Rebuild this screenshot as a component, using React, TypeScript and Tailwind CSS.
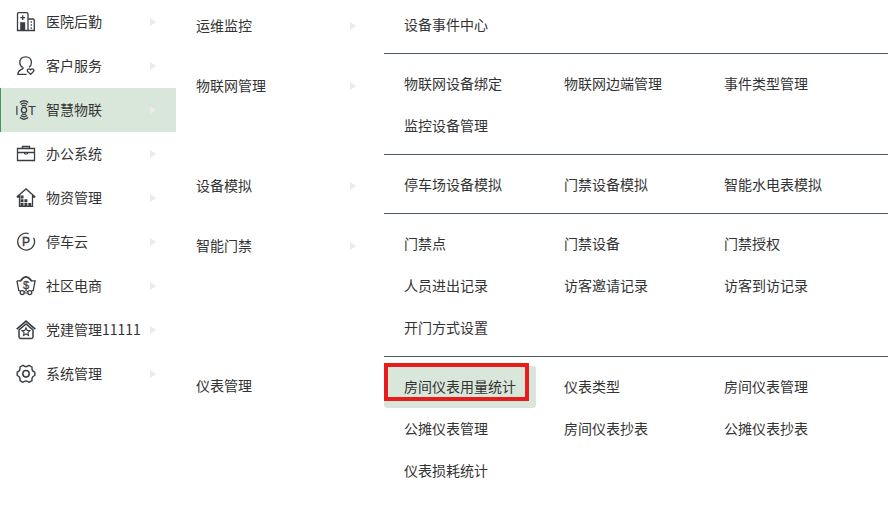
import type { ReactNode } from "react";
import { clsx } from "clsx";

type MenuItem = { label: string; icon: ReactNode; active?: boolean };
type Category = { label: string; height: string; arrow: boolean };
type Entry = { label: string; active?: boolean };

function Icon({ children }: { children: ReactNode }) {
  return (
    <svg
      viewBox="0 0 20 20"
      className="h-5 w-5 shrink-0"
      fill="none"
      stroke="#3a3d42"
      strokeWidth="1.3"
      aria-hidden="true"
    >
      {children}
    </svg>
  );
}

function Arrow() {
  return (
    <svg viewBox="0 0 6 8" className="h-2 w-1.5 shrink-0" fill="#ebebeb" aria-hidden="true">
      <path d="M0 0L6 4L0 8Z" />
    </svg>
  );
}

const hospital = (
  <Icon>
    <path d="M1.5 18.5V2Q1.5 .7 2.8 .7H10.7Q12 .7 12 2V18.5M12 7H17Q18.3 7 18.3 8.3V18.5M.8 18.5H19" />
    <path d="M6.7 3.2V8M4.3 5.6H9.1" />
    <path d="M4.2 10.2H9.2V18.5H4.2Z" fill="#3a3d42" stroke="none" />
    <path d="M15.3 9.2V17" strokeDasharray="1.6 1.4" />
  </Icon>
);

const customer = (
  <Icon>
    <path d="M6.6 11.4C4.4 10.2 3.8 8.2 3.8 6.4C3.8 3 6.3 .8 9.6 .8S15.4 3 15.4 6.4C15.4 8.2 14.8 10 13 11.2" />
    <path d="M6.6 11.4C8 12.4 6.6 12.8 5 13.6C3 14.6 1.8 16.2 1.8 18.4H10.6" />
    <path d="M14.6 18.4L11.7 15.5C10.4 13.8 12.6 11.8 14.6 13.8C16.6 11.8 18.8 13.8 17.5 15.5Z" />
  </Icon>
);

const iot = (
  <Icon>
    <g fill="#3a3d42" stroke="none" fontFamily="Liberation Sans, sans-serif" fontSize="13">
      <text x="-1" y="15">I</text>
      <text x="12" y="15">T</text>
    </g>
    <circle cx="8" cy="10" r="2.6" />
    <path d="M3.8 2.4Q8 -.9 12.2 2.4M4.8 4.4Q8 1.8 11.2 4.4M5.8 6.3Q8 4.6 10.2 6.3" />
    <path d="M3.8 17.6Q8 20.9 12.2 17.6M4.8 15.6Q8 18.2 11.2 15.6M5.8 13.7Q8 15.4 10.2 13.7" />
  </Icon>
);

const briefcase = (
  <Icon>
    <path d="M1.5 4.5H18.5V16.5H1.5ZM6.5 4.5V2.5H13.5V4.5M1.5 8.5H18.5" />
    <path d="M8.5 8.5V10H11.5V8.5" strokeWidth="1" />
  </Icon>
);

const warehouse = (
  <Icon>
    <path d="M.8 9L10 .9L19.2 9M3.5 7V18.4H16.5V7M.8 9H3.5M16.5 9H19.2" />
    <g fill="#3a3d42" stroke="none">
      <path d="M4.5 7.6H7.5V10.5H4.5ZM4.5 11.3H7.5V14.2H4.5ZM8.4 11.3H11.4V14.2H8.4ZM4.5 15H7.5V18H4.5ZM8.4 15H11.4V18H8.4ZM12.3 15H15.3V18H12.3Z" />
    </g>
  </Icon>
);

const parking = (
  <Icon>
    <path d="M12.6 1.6A8.4 8.4 0 1 0 17.6 5.8" />
    <text x="6" y="14" fill="#3a3d42" stroke="#3a3d42" strokeWidth=".4" fontFamily="Liberation Sans, sans-serif" fontSize="12">
      P
    </text>
  </Icon>
);

const shop = (
  <Icon>
    <path d="M.9 4.9H5M15 4.9H19.1L17.2 14.6H15.6M.9 4.9L2.8 14.6H4.4" />
    <path d="M4.2 5.2L7.2 2Q10 -.2 12.8 2L15.8 5.2" strokeWidth="1.8" />
    <text x="7" y="13" fill="#3a3d42" stroke="#3a3d42" strokeWidth=".3" fontFamily="Liberation Sans, sans-serif" fontSize="11">
      $
    </text>
    <circle cx="6.2" cy="16.6" r="2" />
    <circle cx="13.8" cy="16.6" r="2" />
    <path d="M8 15.8L10 14.4L12 15.8M8.2 17H11.8" strokeWidth="1" />
  </Icon>
);

const party = (
  <Icon>
    <path d="M.7 9.2L10 1.2L19.3 9.2" strokeWidth="1.7" />
    <path d="M3 9.8V16.8Q3 18.5 4.7 18.5H15.3Q17 18.5 17 16.8V9.8M3 9.8L10 4L17 9.8" strokeWidth="1.5" />
    <path d="M10 7.8L11.2 10.4L14 10.7L11.9 12.6L12.5 15.4L10 14L7.5 15.4L8.1 12.6L6 10.7L8.8 10.4Z" strokeWidth="1.1" />
  </Icon>
);

const gear = (
  <Icon>
    <path
      d="M7 1.3Q10 4 13 1.3L16 3Q15.4 6.8 18.8 8.2V11.4Q15.4 12.8 16 16.6L13 18.3Q10 15.6 7 18.3L4 16.6Q4.6 12.8 1.2 11.4V8.2Q4.6 6.8 4 3Z"
      strokeLinejoin="round"
      strokeWidth="1.4"
    />
    <circle cx="10" cy="9.8" r="3.2" strokeWidth="1.5" />
  </Icon>
);

const menu: MenuItem[] = [
  { label: "医院后勤", icon: hospital },
  { label: "客户服务", icon: customer },
  { label: "智慧物联", icon: iot, active: true },
  { label: "办公系统", icon: briefcase },
  { label: "物资管理", icon: warehouse },
  { label: "停车云", icon: parking },
  { label: "社区电商", icon: shop },
  { label: "党建管理11111", icon: party },
  { label: "系统管理", icon: gear },
];

const categories: Category[] = [
  { label: "运维监控", height: "min-h-[60px]", arrow: true },
  { label: "物联网管理", height: "min-h-[100px]", arrow: true },
  { label: "设备模拟", height: "min-h-[60px]", arrow: true },
  { label: "智能门禁", height: "min-h-[140px]", arrow: true },
  { label: "仪表管理", height: "min-h-[60px]", arrow: false },
];

const groups: Entry[][] = [
  [{ label: "设备事件中心" }],
  [
    { label: "物联网设备绑定" },
    { label: "物联网边端管理" },
    { label: "事件类型管理" },
    { label: "监控设备管理" },
  ],
  [{ label: "停车场设备模拟" }, { label: "门禁设备模拟" }, { label: "智能水电表模拟" }],
  [
    { label: "门禁点" },
    { label: "门禁设备" },
    { label: "门禁授权" },
    { label: "人员进出记录" },
    { label: "访客邀请记录" },
    { label: "访客到访记录" },
    { label: "开门方式设置" },
  ],
  [
    { label: "房间仪表用量统计", active: true },
    { label: "仪表类型" },
    { label: "房间仪表管理" },
    { label: "公摊仪表管理" },
    { label: "房间仪表抄表" },
    { label: "公摊仪表抄表" },
    { label: "仪表损耗统计" },
  ],
];

export default function App() {
  return (
    <div className="flex min-h-screen items-start bg-white font-['Noto_Sans_CJK_SC',sans-serif] text-sm leading-5 text-[#333]">
      {/* Main menu */}
      <nav className="w-44 shrink-0">
        {menu.map((item) => (
          <a
            key={item.label}
            href="#"
            className={clsx(
              "flex h-11 items-center border-l pr-5 pl-[15px]",
              item.active ? "border-[#3d9a58] bg-[#d9e7db]" : "border-transparent"
            )}
          >
            {item.icon}
            <span className="ml-2.5 flex-1 pb-0.5 whitespace-nowrap">{item.label}</span>
            <Arrow />
          </a>
        ))}
      </nav>

      {/* Categories */}
      <nav className="w-52 shrink-0">
        {categories.map((c) => (
          <div key={c.label} className={clsx("pt-[15px] pr-7 pl-5", c.height)}>
            <a href="#" className="flex items-center justify-between">
              <span className="pb-0.5">{c.label}</span>
              {c.arrow && <Arrow />}
            </a>
          </div>
        ))}
      </nav>

      {/* Pages of each category */}
      <main className="mr-[7px] min-w-0 flex-1">
        {groups.map((group) => (
          <div
            key={group[0].label}
            className="grid grid-cols-[repeat(auto-fill,152px)] gap-x-2 border-b border-[#48576a] pt-[9px] pb-[7px] first:pt-1 last:border-b-0"
          >
            {group.map((entry) => (
              <a
                key={entry.label}
                href="#"
                className={clsx(
                  "relative flex h-[42px] items-center rounded-[3px] pb-0.5 pl-5 whitespace-nowrap",
                  entry.active && "bg-[#d9e7db]"
                )}
              >
                {entry.label}
                {entry.active && (
                  <span className="absolute -top-[3px] left-0 h-[38px] w-[145px] border-4 border-[#e81c1c]" />
                )}
              </a>
            ))}
          </div>
        ))}
      </main>
    </div>
  );
}
